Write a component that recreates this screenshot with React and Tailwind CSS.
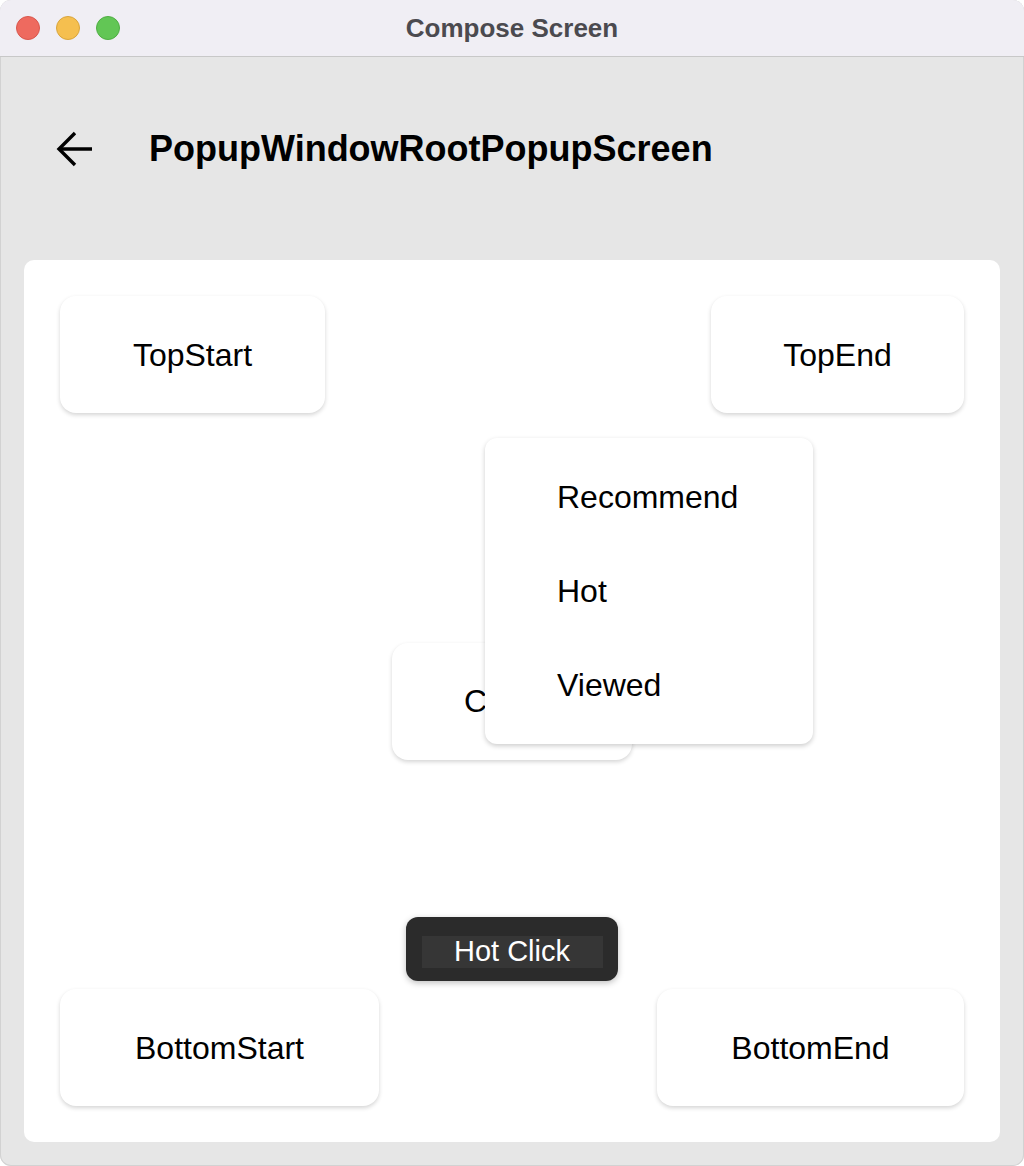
import React from "react";

function Btn({ children, w }) {
  return (
    <div
      className={
        "h-[117px] flex items-center justify-center bg-white rounded-[16px] shadow-[0_2px_4px_rgba(0,0,0,0.17)] text-[32px] text-black " +
        w
      }
    >
      {children}
    </div>
  );
}

export default function App() {
  return (
    <div
      className="w-[1024px] h-[1166px] bg-white"
      style={{ fontFamily: '"Liberation Sans", Arial, sans-serif' }}
    >
      <div className="w-full h-full rounded-[11px] overflow-hidden bg-[#e6e6e6] flex flex-col shadow-[inset_0_0_0_1px_#d2d2d2]">
        <div className="h-[57px] shrink-0 bg-[#f0eef4] border-b border-[#c8c8c8] relative flex items-center justify-center">
          <div className="absolute left-[16px] top-[16px] flex gap-[16px]">
            <div className="w-[24px] h-[24px] rounded-full bg-[#ee6a5f] border border-[#d9574d]" />
            <div className="w-[24px] h-[24px] rounded-full bg-[#f5bf4f] border border-[#d9a53c]" />
            <div className="w-[24px] h-[24px] rounded-full bg-[#62c655] border border-[#4fae43]" />
          </div>
          <span className="text-[26px] font-bold text-[#4b4a4f]">
            Compose Screen
          </span>
        </div>
        <div className="h-[203px] shrink-0 flex items-center pl-[56px] pb-[20px]">
          <svg width="38" height="36" viewBox="0 0 38 36" fill="none" stroke="black" strokeWidth="3.4" strokeLinecap="butt">
            <path d="M36 18H4" />
            <path d="M19 2L3 18l16 16" strokeLinejoin="miter" />
          </svg>
          <span className="ml-[55px] text-[36px] font-bold text-black">
            PopupWindowRootPopupScreen
          </span>
        </div>
        <div className="mx-[24px] mb-[24px] flex-1 bg-white rounded-[10px] p-[36px] flex flex-col justify-between relative">
          <div className="flex justify-between">
            <Btn w="w-[265px]">TopStart</Btn>
            <Btn w="w-[253px]">TopEnd</Btn>
          </div>
          <div className="flex justify-center">
            <Btn w="w-[240px]">Center</Btn>
          </div>
          <div className="flex justify-between">
            <Btn w="w-[319px]">BottomStart</Btn>
            <Btn w="w-[307px]">BottomEnd</Btn>
          </div>

          <div className="absolute left-[461px] top-[178px] w-[328px] py-[12px] bg-white rounded-[12px] shadow-[0_2px_5px_rgba(0,0,0,0.2)] flex flex-col">
            {["Recommend", "Hot", "Viewed"].map((t) => (
              <div key={t} className="h-[94px] flex items-center pl-[72px] text-[32px] text-black">
                {t}
              </div>
            ))}
          </div>

          <div className="absolute left-[382px] top-[657px] w-[212px] h-[64px] bg-[#2b2b2b] rounded-[12px] shadow-[0_2px_6px_rgba(0,0,0,0.25)] flex items-center justify-center">
            <div className="w-[181px] h-[32px] bg-[#363636] flex items-center justify-center text-[29px] text-white mt-[6px]">
              Hot Click
            </div>
          </div>
        </div>
      </div>
    </div>
  );
}
